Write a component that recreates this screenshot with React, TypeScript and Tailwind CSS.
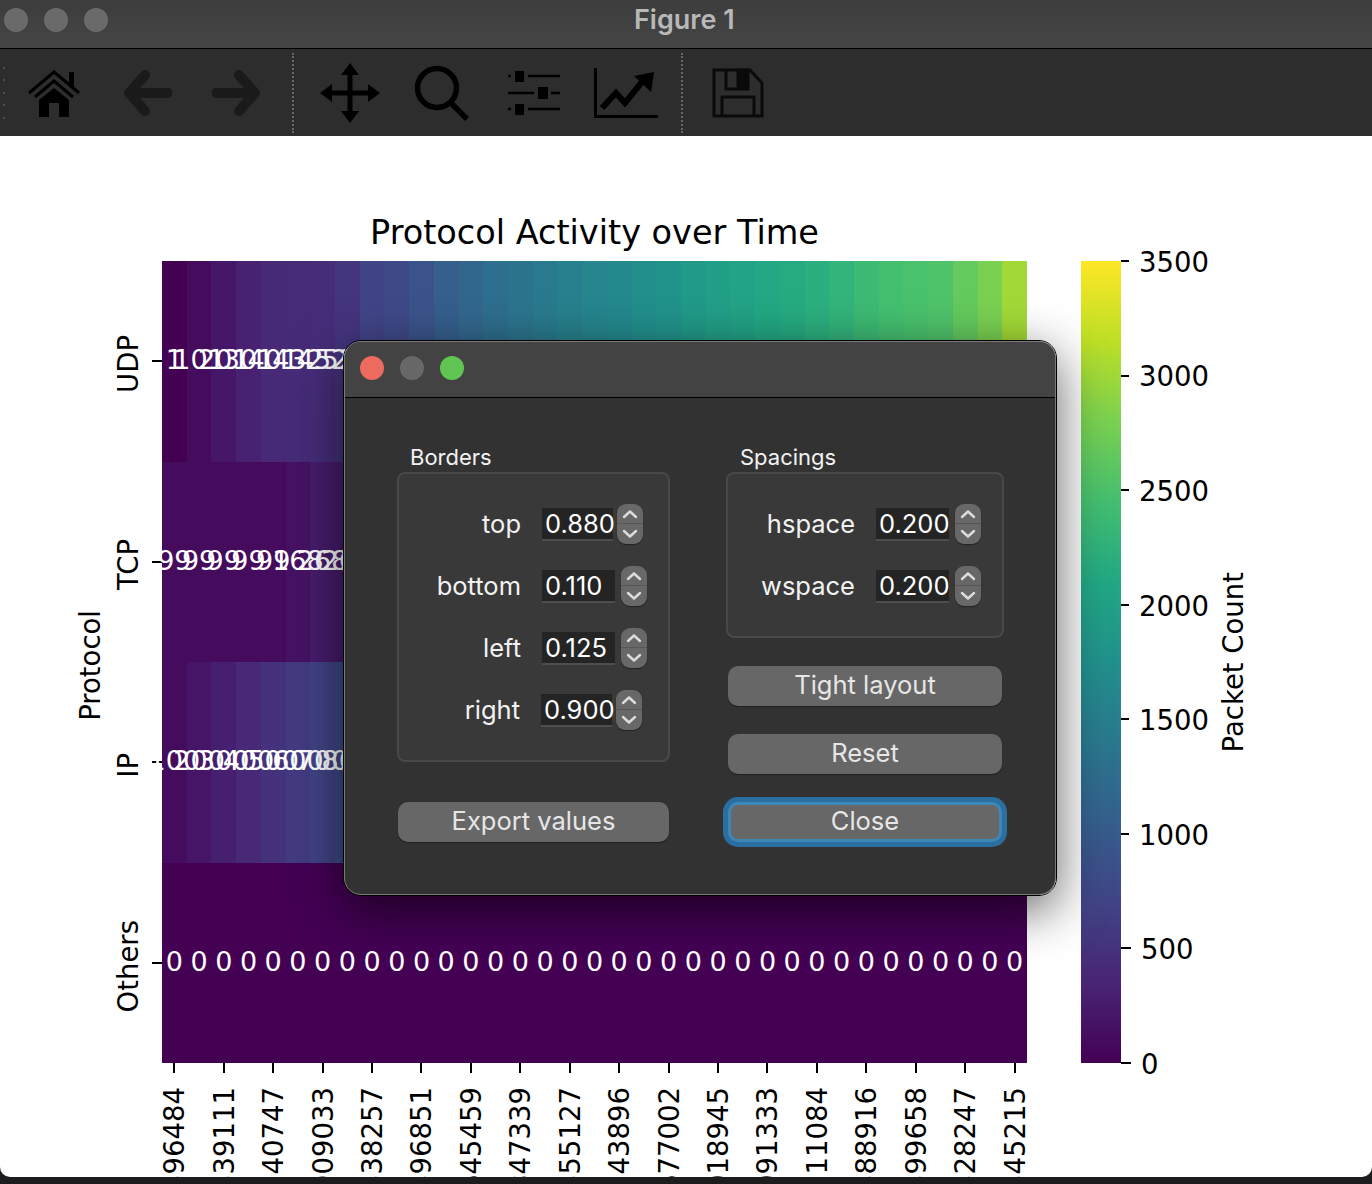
const VIRIDIS = ["#440154", "#482475", "#414487", "#355f8d", "#2a788e", "#21918c", "#22a884", "#44bf70", "#7ad151", "#bddf26", "#fde725"];

function viridis(t: number) {
  const pos = Math.min(t, 0.9999) * 10;
  const i = Math.floor(pos);
  const f = pos - i;
  const hex = (s: string, at: number) => parseInt(s.slice(at, at + 2), 16);
  const mix = (at: number) => Math.round(hex(VIRIDIS[i], at) + (hex(VIRIDIS[i + 1], at) - hex(VIRIDIS[i], at)) * f);
  return `rgb(${mix(1)},${mix(3)},${mix(5)})`;
}

const CELL_W = 865 / 35;
const CELL_H = 802 / 4;

const udpShades = [0, 0.03, 0.06, 0.09, 0.115, 0.123, 0.129, 0.15, 0.2, 0.22, 0.26, 0.3, 0.33, 0.36, 0.385, 0.41, 0.43, 0.45, 0.47, 0.49, 0.51, 0.54, 0.56, 0.575, 0.6, 0.61, 0.63, 0.65, 0.68, 0.7, 0.71, 0.72, 0.76, 0.8, 0.86];
const tcpShades = Array.from({ length: 35 }, (_, i) => (i < 5 ? 0.028 : i === 5 ? 0.048 : i === 6 ? 0.077 : 0.08));

const rows = [
  { shades: udpShades, labels: ["1", "101", "201", "301", "401", "432", "452", "525"] },
  { shades: tcpShades, labels: ["99", "99", "99", "99", "99", "168", "268", "268"] },
  { shades: Array.from({ length: 35 }, (_, i) => Math.min(i + 1, 12) * 0.0286), labels: ["100", "200", "300", "400", "500", "600", "700", "800"] },
  { shades: Array(35).fill(0), labels: Array(35).fill("0") },
];

const yLabels = ["UDP", "TCP", "IP", "Others"];
const xLabels = ["396484", "339111", "240747", "909033", "338257", "396851", "645459", "847339", "355127", "143896", "677002", "018945", "091333", "511084", "388916", "399658", "328247", "345215"];
const barLabels = ["0", "500", "1000", "1500", "2000", "2500", "3000", "3500"];

function Heatmap() {
  return (
    <svg width="865" height="802" viewBox="0 0 865 802" className="block overflow-visible">
      {rows.map((row, r) =>
        row.shades.map((t, c) => (
          <rect key={`${r}-${c}`} x={c * CELL_W} y={r * CELL_H} width={CELL_W + 0.4} height={CELL_H + 0.4} fill={viridis(t)} shapeRendering="crispEdges" />
        ))
      )}
      {rows.map((row, r) =>
        row.labels.map((label, c) => (
          <text key={`${r}-${c}`} x={(c + 0.5) * CELL_W} y={(r + 0.5) * CELL_H + 8} textAnchor="middle" fontSize="27" fill="#fff">
            {label}
          </text>
        ))
      )}
    </svg>
  );
}

function Spinner({ inputW, gap, value }: { inputW: string; gap: string; value: string }) {
  return (
    <div className="flex items-center">
      <div className={`${inputW} h-[33px] bg-[#242424] border-b-2 border-[#4e4e4e] pl-[3px] text-[25.5px] leading-[32px] text-white whitespace-nowrap`}>{value}</div>
      <div className={`${gap} flex h-[40px] w-[26px] flex-col items-center rounded-[9px] bg-[#686868] shadow-[0_1px_1px_rgba(0,0,0,0.4)]`}>
        <div className="flex h-[20px] w-full items-center justify-center border-b border-[#565656]">
          <svg width="16" height="10" viewBox="0 0 16 10" fill="none" stroke="#dcdcdc" strokeWidth="2.4" strokeLinecap="round" strokeLinejoin="round">
            <path d="M2 8 8 2.500 14 8" />
          </svg>
        </div>
        <div className="flex h-[20px] w-full items-center justify-center">
          <svg width="16" height="10" viewBox="0 0 16 10" fill="none" stroke="#dcdcdc" strokeWidth="2.4" strokeLinecap="round" strokeLinejoin="round">
            <path d="M2 2 8 7.500 14 2" />
          </svg>
        </div>
      </div>
    </div>
  );
}

function Field({ label, labelW, value, inputW, gap }: { label: string; labelW: string; value: string; inputW: string; gap: string }) {
  return (
    <div className="flex h-[62px] items-center">
      <div className={`${labelW} shrink-0 text-right text-[25.5px] text-[#f2f2f2]`}>{label}</div>
      <div className="ml-[21px]">
        <Spinner inputW={inputW} gap={gap} value={value} />
      </div>
    </div>
  );
}

function DialogButton({ label }: { label: string }) {
  return (
    <div className="flex h-[40px] items-center justify-center rounded-[10px] bg-[#676767] pb-px text-[25.5px] text-[#e6e6e6] shadow-[0_1px_1px_rgba(0,0,0,0.4)]">
      {label}
    </div>
  );
}

function SubplotTool() {
  return (
    <div className="absolute left-[343px] top-[340px] flex h-[556px] w-[714px] flex-col rounded-[18px] border border-black shadow-[0_14px_50px_rgba(0,0,0,0.62)] font-['Inter',sans-serif]">
      <div className="flex h-full flex-col overflow-hidden rounded-[17px] border border-[#7a7a7a] bg-[#323232]">
        <div className="flex h-[56px] shrink-0 items-center gap-[16px] border-b border-black bg-[#434343] pb-[3px] pl-[15px]">
          <div className="h-[24px] w-[24px] rounded-full bg-[#ec6a5e]" />
          <div className="h-[24px] w-[24px] rounded-full bg-[#676767]" />
          <div className="h-[24px] w-[24px] rounded-full bg-[#61c554]" />
        </div>
        <div className="flex pl-[52px] pt-[44px]">
          <div className="w-[273px]">
            <div className="h-[30px] pl-[13px] text-[22px] leading-[30px] text-[#f2f2f2]">Borders</div>
            <div className="h-[290px] rounded-[8px] border-2 border-[#494949] bg-[#393939] pt-[19px]">
              <Field label="top" labelW="w-[122px]" value="0.880" inputW="w-[71px]" gap="ml-[4px]" />
              <Field label="bottom" labelW="w-[122px]" value="0.110" inputW="w-[73px]" gap="ml-[6px]" />
              <Field label="left" labelW="w-[122px]" value="0.125" inputW="w-[73px]" gap="ml-[6px]" />
              <Field label="right" labelW="w-[121px]" value="0.900" inputW="w-[71px]" gap="ml-[4px]" />
            </div>
            <div className="mx-px mt-[40px]">
              <DialogButton label="Export values" />
            </div>
          </div>
          <div className="ml-[56px] w-[278px]">
            <div className="h-[30px] pl-[14px] text-[22px] leading-[30px] text-[#f2f2f2]">Spacings</div>
            <div className="h-[166px] rounded-[8px] border-2 border-[#494949] bg-[#393939] pt-[19px]">
              <Field label="hspace" labelW="w-[127px]" value="0.200" inputW="w-[73px]" gap="ml-[6px]" />
              <Field label="wspace" labelW="w-[127px]" value="0.200" inputW="w-[73px]" gap="ml-[6px]" />
            </div>
            <div className="mx-[2px] mt-[28px] flex flex-col gap-[28px]">
              <DialogButton label="Tight layout" />
              <DialogButton label="Reset" />
              <div className="flex h-[40px] items-center justify-center rounded-[10px] border-[3px] border-[#3d86b7] bg-[#676767] pb-px text-[25.5px] text-[#e6e6e6] shadow-[0_0_0_5px_#2a6f9f]">
                Close
              </div>
            </div>
          </div>
        </div>
      </div>
    </div>
  );
}

function Toolbar() {
  return (
    <div className="flex h-[87px] shrink-0 items-center bg-[#2d2d2d] pl-[3px]">
      <div className="flex h-[52px] w-[2px] flex-col justify-between">
        {[0, 1, 2, 3, 4].map((i) => (
          <div key={i} className="h-[2px] w-[2px] rounded-full bg-[#5a5a5a]" />
        ))}
      </div>
      {/* home */}
      <svg className="ml-[23px]" width="52" height="48" viewBox="0 0 52 48" fill="none" stroke="#000">
        <path d="M1 24 26 3l15 12.500M41 15.500 51 24" strokeWidth="3" />
        <path d="M7 28 26 12l19 16" strokeWidth="3" />
        <path d="M11 31 26 19l15 12v17H31V34H21v14H11Z" fill="#000" stroke="none" />
        <rect x="41" y="3" width="5" height="15" fill="#000" stroke="none" />
      </svg>
      {/* back */}
      <svg className="ml-[43px]" width="49" height="48" viewBox="0 0 49 48" fill="none" stroke="#1a1a1a" strokeWidth="10" strokeLinecap="round" strokeLinejoin="round">
        <path d="M22 6 6 24l16 18M12 24h33" />
      </svg>
      {/* forward */}
      <svg className="ml-[40px]" width="49" height="48" viewBox="0 0 49 48" fill="none" stroke="#1a1a1a" strokeWidth="10" strokeLinecap="round" strokeLinejoin="round">
        <path d="M27 6l16 18-16 18M37 24H4" />
      </svg>
      <div className="ml-[31px] h-[80px] border-l-2 border-dotted border-[#666]" />
      {/* move */}
      <svg className="ml-[26px]" width="60" height="60" viewBox="0 0 60 60" fill="#000">
        <path d="M30 0l9 12H21ZM30 60l-9-12h18ZM0 30l12-9v18ZM60 30l-12 9V21Z" />
        <path d="M30 8v44M8 30h44" stroke="#000" strokeWidth="5" />
      </svg>
      {/* zoom */}
      <svg className="ml-[34px]" width="56" height="56" viewBox="0 0 56 56" fill="none" stroke="#000" strokeWidth="5.500">
        <circle cx="23" cy="23" r="19.500" />
        <path d="M36 37l17 17" />
      </svg>
      {/* subplots */}
      <svg className="ml-[38px]" width="52" height="44" viewBox="0 0 52 44" fill="#000">
        <path d="M0 5h3M20 5h32M0 22h26M43 22h9M0 38h3M20 38h32" stroke="#000" strokeWidth="2.500" />
        <rect x="7" y="0" width="9" height="11" />
        <rect x="30" y="16" width="10" height="12" />
        <rect x="7" y="33" width="9" height="11" />
      </svg>
      {/* axes */}
      <svg className="ml-[34px]" width="64" height="50" viewBox="0 0 64 50" fill="none" stroke="#000">
        <path d="M1.500 0v48.500H64" strokeWidth="3" />
        <path d="M8 40l14-15 9 10 17-21" strokeWidth="6" />
        <path d="M40 8l20-4-3 20Z" fill="#000" stroke="none" />
      </svg>
      <div className="ml-[23px] h-[80px] border-l-2 border-dotted border-[#666]" />
      {/* save */}
      <svg className="ml-[29px]" width="52" height="50" viewBox="0 0 52 50" fill="none" stroke="#0a0a0a" strokeWidth="3">
        <path d="M2 2h36l12 13v33H2Z" />
        <path d="M14 2v19h22V2" />
        <rect x="26" y="2" width="9" height="18" fill="#0a0a0a" />
        <path d="M10 48V29h32v19" />
      </svg>
    </div>
  );
}

export default function App() {
  return (
    <div className="relative flex h-[1184px] w-[1372px] flex-col overflow-hidden bg-[#1c1c1e]">
      <div className="flex h-[49px] shrink-0 items-center border-b border-black bg-linear-to-b from-[#3d3d3d] to-[#454545] pb-[8px] pl-[4px]">
        <div className="flex gap-[16px]">
          <div className="h-[24px] w-[24px] rounded-full bg-[#6a6a6a]" />
          <div className="h-[24px] w-[24px] rounded-full bg-[#6a6a6a]" />
          <div className="h-[24px] w-[24px] rounded-full bg-[#6a6a6a]" />
        </div>
        <div className="ml-[526px] font-['Inter',sans-serif] text-[27px] font-semibold text-[#b8b8b8]">Figure 1</div>
      </div>
      <Toolbar />
      <div className="h-[1041px] shrink-0 overflow-hidden rounded-b-[10px] bg-white pt-[77px] font-['DejaVu_Sans',sans-serif] text-[27.5px] text-black">
        <div className="ml-[162px] mb-[8px] h-[40px] w-[865px] text-center text-[33.5px] leading-[40px]">Protocol Activity over Time</div>
        <div className="flex">
          <div className="flex h-[802px] w-[162px] shrink-0">
            <div className="ml-[74px] flex w-[32px] items-center pt-[6px]">
              <div className="rotate-180 leading-[32px] [writing-mode:vertical-rl]">Protocol</div>
            </div>
            <div className="ml-[6px] flex flex-col">
              {yLabels.map((label) => (
                <div key={label} className="flex h-[200.5px] items-center">
                  <div className="flex h-full w-[32px] items-center justify-center pt-[6px]">
                    <div className="rotate-180 leading-[32px] [writing-mode:vertical-rl]">{label}</div>
                  </div>
                  <div className="ml-[8px] h-[2px] w-[10px] bg-black" />
                </div>
              ))}
            </div>
          </div>
          <div className="w-[865px] shrink-0">
            <Heatmap />
            <div className="grid grid-cols-[repeat(18,49.43px)]">
              {xLabels.map((label, i) => (
                <div key={i} className="flex w-[24.7px] flex-col items-center">
                  <div className="h-[10px] w-[2px] bg-black" />
                  <div className="mt-[14px] rotate-180 whitespace-nowrap leading-[32px] [writing-mode:vertical-rl]">{label}</div>
                </div>
              ))}
            </div>
          </div>
          <div className="ml-[54px] h-[802px] w-[40px] shrink-0 bg-[linear-gradient(to_top,#440154,#482475,#414487,#355f8d,#2a788e,#21918c,#22a884,#44bf70,#7ad151,#bddf26,#fde725)]" />
          <div className="flex h-[802px] w-[88px] shrink-0 flex-col-reverse justify-between">
            {barLabels.map((label) => (
              <div key={label} className="flex h-0 items-center">
                <div className="h-[2px] w-[10px] bg-black" />
                <div className="ml-[10px] pt-[3px]">{label}</div>
              </div>
            ))}
          </div>
          <div className="ml-[8px] flex h-[802px] w-[32px] items-center">
            <div className="rotate-180 whitespace-nowrap leading-[32px] [writing-mode:vertical-rl]">Packet Count</div>
          </div>
        </div>
      </div>
      <SubplotTool />
    </div>
  );
}
